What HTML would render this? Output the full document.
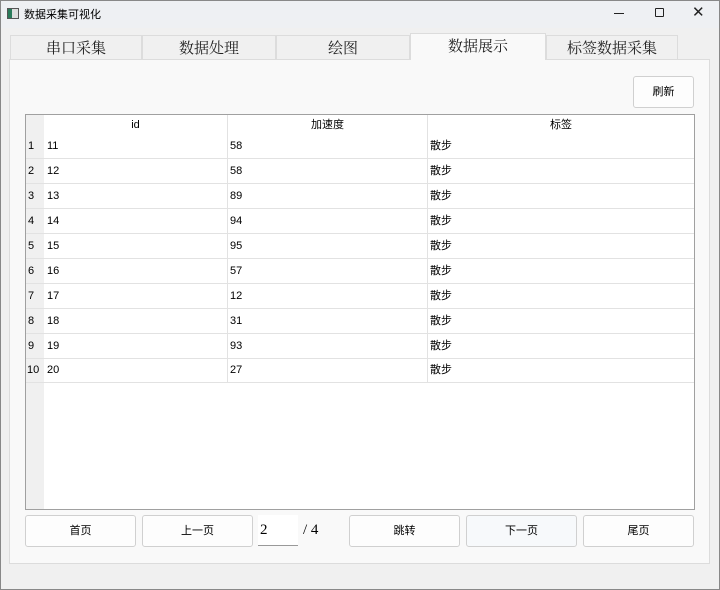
<!DOCTYPE html>
<html><head><meta charset="utf-8"><style>
*{box-sizing:border-box;margin:0;padding:0}
body{width:720px;height:590px;background:#f0f0f0;font-family:"Liberation Sans","Noto Sans CJK SC",sans-serif;font-size:11px;color:#000;position:relative;overflow:hidden}
.abs{position:absolute}
.title{left:0;top:0;width:720px;height:28px;background:#eef0f3}
.tab{position:absolute;top:35px;height:24px;background:#f0f0f0;border:1px solid #dcdcdc;border-bottom:none;font-family:"Noto Serif CJK SC","Liberation Serif",serif;font-size:15px;text-align:center;line-height:24px;color:#222}
.tab.sel{top:33px;height:27px;background:#f9f9f9;z-index:2}
.panel{left:9px;top:59px;width:701px;height:505px;background:#f9f9f9;border:1px solid #dcdcdc}
.btn{position:absolute;height:32px;background:#fdfdfd;border:1px solid #d0d0d0;border-radius:3px;text-align:center;line-height:30px;font-size:11px}
.table{left:25px;top:114px;width:670px;height:396px;background:#fff;border:1px solid #a0a0a0}
.vh{position:absolute;left:0;top:0;width:18px;height:394px;background:#f0f0f0}
.row{position:absolute;left:0;width:668px;height:25px;border-bottom:1px solid #e2e2e2}
.row span{position:absolute;top:0;line-height:24px}
.hd{position:absolute;top:0;height:20px;line-height:20px;text-align:center;background:#fff;border-right:1px solid #e2e2e2}
.frame{left:0;top:0;width:720px;height:590px;border:1px solid #888;pointer-events:none;z-index:9}
</style></head><body>
<div class="abs title"></div>
<div class="abs frame"></div>
<div class="abs" style="left:7px;top:8px;width:12px;height:11px;border:1px solid #555;background:linear-gradient(90deg,#2a7a5a 0 40%,#ddd 40%)"></div>
<div class="abs" style="left:24px;top:6px;font-size:11px">数据采集可视化</div>
<div class="abs" style="left:614px;top:13px;width:10px;height:1px;background:#222"></div>
<div class="abs" style="left:655px;top:8px;width:9px;height:9px;border:1px solid #222;border-radius:1px"></div>
<div class="abs" style="left:692px;top:3px;font-size:15px;color:#222">✕</div>
<div class="abs panel"></div>
<div class="tab" style="left:10px;width:132px">串口采集</div>
<div class="tab" style="left:142px;width:134px">数据处理</div>
<div class="tab" style="left:276px;width:134px">绘图</div>
<div class="tab sel" style="left:410px;width:136px">数据展示</div>
<div class="tab" style="left:546px;width:132px">标签数据采集</div>
<div class="btn" style="left:633px;top:76px;width:61px">刷新</div>
<div class="abs table">
<div class="vh"></div>
<div class="hd" style="left:18px;width:184px">id</div>
<div class="hd" style="left:202px;width:200px">加速度</div>
<div class="hd" style="left:402px;width:266px;border-right:none">标签</div>
<div class="abs" style="left:201px;top:20px;width:1px;height:247px;background:#e2e2e2"></div>
<div class="abs" style="left:401px;top:20px;width:1px;height:247px;background:#e2e2e2"></div>
<div class="row" style="top:19px"><span style="left:2px">1</span><span style="left:21px">11</span><span style="left:204px">58</span><span style="left:404px">散步</span></div>
<div class="row" style="top:44px"><span style="left:2px">2</span><span style="left:21px">12</span><span style="left:204px">58</span><span style="left:404px">散步</span></div>
<div class="row" style="top:69px"><span style="left:2px">3</span><span style="left:21px">13</span><span style="left:204px">89</span><span style="left:404px">散步</span></div>
<div class="row" style="top:94px"><span style="left:2px">4</span><span style="left:21px">14</span><span style="left:204px">94</span><span style="left:404px">散步</span></div>
<div class="row" style="top:119px"><span style="left:2px">5</span><span style="left:21px">15</span><span style="left:204px">95</span><span style="left:404px">散步</span></div>
<div class="row" style="top:144px"><span style="left:2px">6</span><span style="left:21px">16</span><span style="left:204px">57</span><span style="left:404px">散步</span></div>
<div class="row" style="top:169px"><span style="left:2px">7</span><span style="left:21px">17</span><span style="left:204px">12</span><span style="left:404px">散步</span></div>
<div class="row" style="top:194px"><span style="left:2px">8</span><span style="left:21px">18</span><span style="left:204px">31</span><span style="left:404px">散步</span></div>
<div class="row" style="top:219px"><span style="left:2px">9</span><span style="left:21px">19</span><span style="left:204px">93</span><span style="left:404px">散步</span></div>
<div class="row" style="top:243px"><span style="left:1px">10</span><span style="left:21px">20</span><span style="left:204px">27</span><span style="left:404px">散步</span></div>
</div>
<div class="btn" style="left:25px;top:515px;width:111px">首页</div>
<div class="btn" style="left:142px;top:515px;width:111px">上一页</div>
<div class="abs" style="left:258px;top:515px;width:40px;height:31px;background:#fff;border-bottom:1px solid #999;font-family:'Liberation Serif',serif;font-size:15px;line-height:31px;padding-left:2px">2</div>
<div class="abs" style="left:303px;top:515px;font-family:'Liberation Serif',serif;font-size:15px;line-height:31px">/ 4</div>
<div class="btn" style="left:349px;top:515px;width:111px">跳转</div>
<div class="btn" style="left:466px;top:515px;width:111px;background:#f7f9fb">下一页</div>
<div class="btn" style="left:583px;top:515px;width:111px">尾页</div>
</body></html>
